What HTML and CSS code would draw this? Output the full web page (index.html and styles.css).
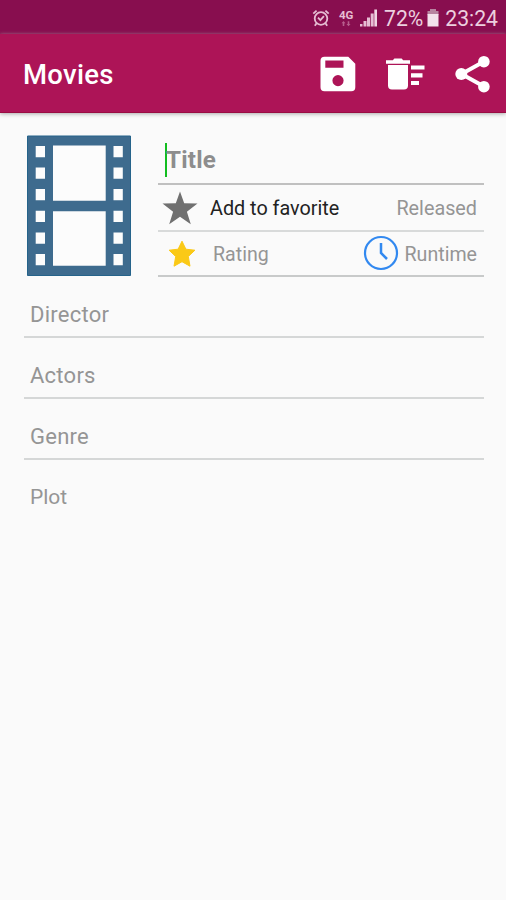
FILE: index.html
```html
<!DOCTYPE html>
<html lang="en">
<head>
<meta charset="utf-8">
<title>Movies</title>
<link rel="stylesheet" href="styles.css">
</head>
<body>
<div class="status">
  <svg class="alarm" width="18" height="18" viewBox="0 0 18 18" fill="none" stroke="#e6bdd3" stroke-width="1.8"><circle cx="9" cy="9.5" r="6.3"/><path d="M1.3 4.7 4.6 1.6M16.7 4.7 13.4 1.6M4.6 14.2 2.8 16.7M13.4 14.2l1.8 2.5M6 8.7l2.4 2.4 3.5-4"/></svg>
  <div class="network"><span>4G</span><svg width="10" height="6" viewBox="0 0 10 6" fill="#b75f8d"><path d="M2.5 0 4.5 2.3H3.3V5H1.7V2.3H.5zM7.5 5.3 5.5 3h1.2V.3h1.6V3h1.2z"/></svg></div>
  <svg class="signal" width="18" height="18" viewBox="0 0 18 18" fill="#e6bdd3"><path d="M0 15h2.5v2.5H0zM3.500 12h3v5.5h-3zM7 8.500h3v9H7zM10.700 4.500h3v13h-3z"/><path fill="#f0d5e3" d="M14.300.5H17v17h-2.700z"/></svg>
  <span class="percent">72%</span>
  <svg class="battery" width="12" height="18" viewBox="0 0 12 18"><path fill="#b783a0" d="M3 0h6v2h2.500v4H.5V2H3z"/><path fill="#f3e1ec" d="M.5 5h11v12.500H.5z"/></svg>
  <span class="time">23:24</span>
</div>
<header class="appbar">
  <h1>Movies</h1>
  <div class="actions">
    <svg class="save" width="36" height="36" viewBox="0 0 36 36"><path fill="#fff" fill-rule="evenodd" d="M4.500.7h23.800l7 7v23.500a4 4 0 0 1-4 4H4.500a4 4 0 0 1-4-4V4.700a4 4 0 0 1 4-4zM5.300 4.500v7.300h18.200V4.500zM18 19a5.600 5.600 0 1 0 0 11.200A5.600 5.600 0 0 0 18 19z"/></svg>
    <svg class="trash" width="39" height="32" viewBox="0 0 39 32" fill="#fff"><path d="M0 2.300h6.800L8.400.4h7.200l1.600 1.900H24v3.500H0zM2 7h20v20.500a4 4 0 0 1-4 4H6a4 4 0 0 1-4-4zM25 7.400h13.500v4.100H25zM25 15.200h11.500v4.200H25zM25 23h8v4h-8z"/></svg>
    <svg class="share" width="36" height="38" viewBox="0 0 36 38"><path d="M29 6.500 6.500 19 29 31.500" fill="none" stroke="#fff" stroke-width="4"/><g fill="#fff"><circle cx="28.900" cy="6.700" r="5.800"/><circle cx="6.300" cy="19" r="6"/><circle cx="28.900" cy="31.700" r="5.800"/></g></svg>
  </div>
</header>
<main>
  <section class="summary">
    <svg class="poster" width="104" height="141" viewBox="0 0 104 141"><path fill="#3e6b8e" stroke="#25638a" d="M.5 1h103v139.500H.5z"/><g fill="#fcfcfc"><path d="M26 10.500h52.700v55.200H26zM26 76.200h52.700v54.600H26z"/><path id="holes" d="M8.700 11H18v11.300H8.700zM8.700 32.500H18v11.300H8.700zM8.700 54H18v11.300H8.700zM8.700 75.700H18V87H8.700zM8.700 97.500H18v11.300H8.700zM8.700 119H18v11.300H8.700z"/><use href="#holes" x="77.800"/></g></svg>
    <div class="details">
      <div class="row title"><span class="caret"></span><span>Title</span></div>
      <div class="row favorite">
        <svg width="36" height="34" viewBox="0 0 36 34"><path fill="#707070" d="m18 .5 4.200 11.700 13.300.3-10.600 8.200 3.900 12.500L18 25.700 7.200 33.200l3.900-12.500L.5 12.500l13.300-.3z"/></svg>
        <span class="add">Add to favorite</span><span class="end released">Released</span>
      </div>
      <div class="row rating">
        <svg width="28" height="28" viewBox="0 0 28 28"><path fill="#fac917" stroke="#fac917" stroke-linejoin="round" d="m14 1.200 3.900 8 9 1-6.600 6.300 1.700 9.700-8-4.500-8 4.500 1.700-9.700-6.600-6.300 9-1z"/></svg>
        <span class="rate">Rating</span>
        <svg class="clock end" width="36" height="36" viewBox="0 0 36 36" fill="none" stroke="#3289f0"><circle cx="18" cy="18" r="16" stroke-width="2.200"/><path d="M18 8v10l6 6" stroke-width="2.500"/></svg>
        <span class="runtime">Runtime</span>
      </div>
    </div>
  </section>
  <section class="fields">
    <div class="field"><span>Director</span></div>
    <div class="field"><span>Actors</span></div>
    <div class="field"><span>Genre</span></div>
    <div class="field plot"><span>Plot</span></div>
  </section>
</main>
</body>
</html>
```
FILE: styles.css
```css
* { box-sizing: border-box; }
body { margin: 0; min-height: 900px; background: #fafafa; color: #959595; font-family: Roboto, sans-serif; font-size: 22px; }
svg { display: block; flex: none; }
.status { height: 34px; background: #880e4f; color: #ecd0df; display: flex; align-items: center; padding: 2px 8px 0 312px; white-space: nowrap; }
.network { width: 16px; margin-left: 9px; font-size: 11.5px; line-height: 11px; font-weight: 700; color: #e6bdd3; }
.network svg { margin-left: 2px; }
.signal { margin-left: 5px; }
.percent { width: 40px; margin-left: 6px; font-size: 21.2px; }
.battery { margin-left: 3px; }
.time { margin-left: auto; font-size: 21.2px; }
.appbar { height: 79px; background: #ad1457; border-bottom: 1px solid #9a0c43; box-shadow: 0 1px 4px #aaa; color: #fff; display: flex; align-items: center; justify-content: space-between; padding: 2px 15px 0 23px; }
h1 { margin: 2px 0 0; font-size: 27.5px; font-weight: 500; line-height: 32px; letter-spacing: .3px; }
.actions { display: flex; align-items: center; }
.trash { margin-left: 30px; }
.share { margin-left: 30px; }
main { padding: 22px 22px 0 24px; }
.summary { display: flex; }
.poster { margin-left: 3px; }
.details { width: 326px; margin-left: 27px; }
.row { display: flex; align-items: center; border-bottom: 2px solid #c8caca; white-space: nowrap; }
.title { height: 50px; border-color: #c0c0c0; color: #8d8d8d; font-size: 24.2px; font-weight: 700; padding: 2px 0 0 7px; letter-spacing: .2px; }
.caret { width: 2px; height: 34px; margin-right: -1px; background: #12bd20; }
.favorite { height: 47px; padding: 1px 7px 0 4px; font-size: 19.8px; border-color: #d8dada; }
.add { margin-left: 12px; color: #222; }
.end { margin-left: auto; }
.rating { height: 45px; padding: 1px 7px 0 10px; font-size: 19.6px; }
.clock { margin-bottom: 2px; }
.rate { margin-left: 17px; }
.runtime { margin-left: 6px; }
.released { font-size: 19.8px; }
.field { height: 61px; border-bottom: 2px solid #d5d7d7; padding: 15px 6px 0; display: flex; align-items: center; letter-spacing: .25px; }
.plot { border: 0; font-size: 21px; height: 61px; padding-top: 12px; letter-spacing: 0; }
```
